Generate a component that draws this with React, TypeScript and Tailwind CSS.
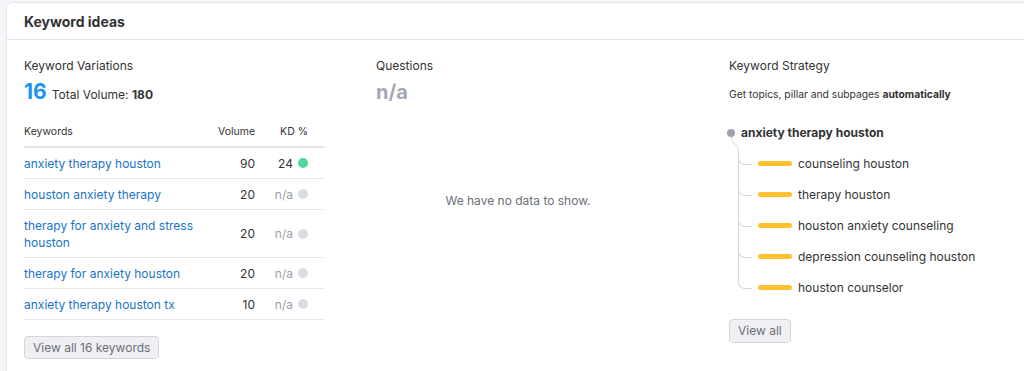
import React from 'react';

const rows = [
  { kw: 'anxiety therapy houston', vol: 90, kd: '24', dot: 'bg-[#4fd89c]', wrap: false },
  { kw: 'houston anxiety therapy', vol: 20, kd: 'n/a', dot: 'bg-[#dcdde4]', wrap: false },
  { kw: 'therapy for anxiety and stress houston', vol: 20, kd: 'n/a', dot: 'bg-[#dcdde4]', wrap: true },
  { kw: 'therapy for anxiety houston', vol: 20, kd: 'n/a', dot: 'bg-[#dcdde4]', wrap: false },
  { kw: 'anxiety therapy houston tx', vol: 10, kd: 'n/a', dot: 'bg-[#dcdde4]', wrap: false },
];

const children = [
  'counseling houston',
  'therapy houston',
  'houston anxiety counseling',
  'depression counseling houston',
  'houston counselor',
];

export default function App() {
  return (
    <div className="w-[1024px] h-[371px] overflow-hidden bg-[#f4f5f9] pl-[6px] pt-[2px] font-['Inter','Liberation_Sans',sans-serif] text-[#333]">
      <div className="w-[1030px] h-[400px] bg-white border-l border-t border-[#e6e7ed] rounded-tl-[6px]">
        {/* header */}
        <div className="h-[37px] flex items-center px-[17px] border-b border-[#e0e1e9]">
          <h2 className="text-[14px] font-bold text-[#333]">Keyword ideas</h2>
        </div>

        <div className="flex pl-[17px] pt-[17px]">
          {/* Keyword Variations */}
          <div className="w-[300px] flex flex-col items-start">
            <div className="text-[12px] leading-[18px] text-[#333]">Keyword Variations</div>
            <div className="flex items-baseline mt-[3px] h-[28px]">
              <span className="text-[21px] font-bold text-[#1a95f0] leading-[28px]">16</span>
              <span className="text-[12px] ml-[5px] text-[#333]">Total Volume: <b className="font-bold">180</b></span>
            </div>
            <div className="mt-[12px] w-full">
              <div className="flex items-center h-[30px] border-b-2 border-[#e4e5ea] text-[10.5px] text-[#333]">
                <div className="flex-1">Keywords</div>
                <div className="w-[50px] text-right">Volume</div>
                <div className="w-[69px] text-right pr-[16px]">KD %</div>
              </div>
              {rows.map((r) => (
                <div
                  key={r.kw}
                  className={`flex items-center border-b border-[#e8e9ee] text-[12px] leading-[17px] ${r.wrap ? 'h-[48px]' : 'h-[31px]'}`}
                >
                  <div className="flex-1 pr-[8px] text-[#1a73c8]">{r.kw}</div>
                  <div className="w-[50px] text-right text-[#333]">{r.vol}</div>
                  <div className="w-[69px] flex items-center justify-end pr-[16px]">
                    <span className={r.kd === 'n/a' ? 'text-[#9a9cab]' : 'text-[#333]'}>{r.kd}</span>
                    <span className={`ml-[5px] w-[10px] h-[10px] rounded-full ${r.dot}`} />
                  </div>
                </div>
              ))}
            </div>
            <button className="mt-[16px] h-[23px] px-[8px] rounded-[4px] border border-[#d4d5dc] bg-[#f0f0f4] text-[12px] text-[#6c6e79]">
              View all 16 keywords
            </button>
          </div>

          {/* Questions */}
          <div className="w-[284px] ml-[52px] flex flex-col">
            <div className="text-[12px] leading-[18px] text-[#333]">Questions</div>
            <div className="text-[20px] font-bold text-[#a5a8b6] leading-[28px] mt-[3px]">n/a</div>
            <div className="mt-[86px] text-center text-[12px] text-[#6c6e79]">We have no data to show.</div>
          </div>

          {/* Keyword Strategy */}
          <div className="ml-[69px] flex-1 flex flex-col items-start">
            <div className="text-[12px] leading-[18px] text-[#333]">Keyword Strategy</div>
            <div className="mt-[12px] text-[10.3px] leading-[15px] text-[#333]">
              Get topics, pillar and subpages <b className="font-bold">automatically</b>
            </div>
            <div className="mt-[16px]">
              <div className="flex items-center h-[30px]">
                <span className="w-[8px] h-[8px] rounded-full bg-[#9ea2b0] ml-[-2px]" />
                <span className="ml-[6px] text-[12px] font-bold text-[#333]">anxiety therapy houston</span>
              </div>
              <div className="relative -mt-[11px]">
                <svg className="absolute left-[0px] top-[0px]" width="12" height="14" viewBox="0 0 12 14" fill="none">
                  <path d="M2.5 0 C2.5 9 9.5 5 9.5 14" stroke="#d5d7de" strokeWidth="1" />
                </svg>
                {children.map((c, i) => (
                  <div key={c} className={`flex items-stretch ml-[9px] ${i === 0 ? 'h-[42px]' : 'h-[31px]'}`}>
                    <div className="relative w-[14px]">
                      {i < children.length - 1 && (
                        <div className={`absolute left-0 bottom-0 border-l border-[#d5d7de] ${i === 0 ? 'top-[14px]' : 'top-0'}`} />
                      )}
                      <div className={`absolute left-0 bottom-[14px] w-full border-l border-b border-[#d5d7de] rounded-bl-[7px] ${i === 0 ? 'top-[14px]' : 'top-0'}`} />
                    </div>
                    <div className="flex items-end pb-[7px]">
                      <div className="flex items-center h-[17px]">
                        <span className="ml-[6px] w-[34px] h-[5px] rounded-full bg-[#ffc22e]" />
                        <span className="ml-[6px] text-[12px] text-[#333]">{c}</span>
                      </div>
                    </div>
                  </div>
                ))}
              </div>
            </div>
            <button className="mt-[16px] h-[24px] px-[8px] rounded-[4px] border border-[#d4d5dc] bg-[#f0f0f4] text-[12px] text-[#6c6e79]">
              View all
            </button>
          </div>
        </div>
      </div>
    </div>
  );
}
